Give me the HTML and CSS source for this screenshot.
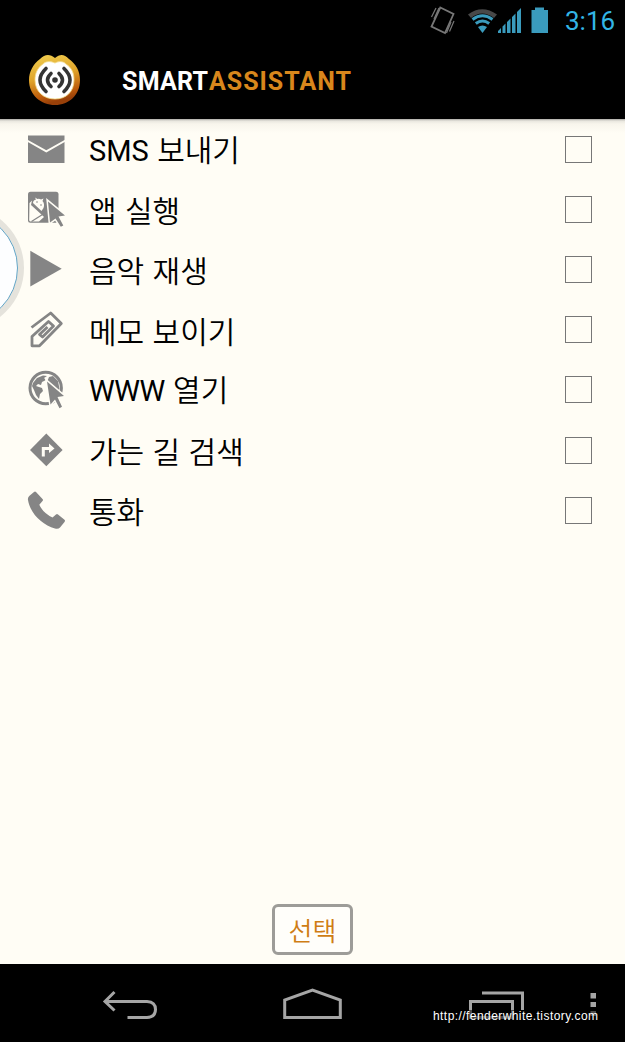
FILE: index.html
```html
<!DOCTYPE html>
<html lang="ko">
<head>
    <meta charset="UTF-8">
    <meta name="viewport" content="width=device-width, initial-scale=1.0">
    <title>Smart Assistant</title>
    <link rel="stylesheet" href="styles.css">
</head>
<body>
    <div class="status-bar">
        <svg class="status-icons" width="130" height="42" viewBox="425 0 130 42">
            <g fill="none" stroke="#777" stroke-width="1.4">
                <path d="M440.300 7.500L453.500 14L445 33L431.500 26.500Z" stroke-width="1.800"/>
                <path d="M436 8L431.500 17M439 8L434 19M454 21L449.500 31.500M451 22L446.500 33" stroke-width="1.200"/>
            </g>
            <path d="M468 14.500Q482 4 497 14.500L494 18Q482 9 471 18Z" fill="#484848"/>
            <g fill="none" stroke="#3a9bbd" stroke-width="3">
                <path d="M472.500 19.500Q482.500 12 492.500 19.500"/>
                <path d="M475.800 23.500Q482.500 18.500 489.200 23.500"/>
            </g>
            <path d="M478 27Q482.500 24 487 27L482.500 33Z" fill="#3a9bbd"/>
            <path d="M498 33V31L501 28V33ZM502.500 33V26.500L505.500 23.500V33ZM507 33V22L510.500 18.500V33ZM512 33V17L515.500 13.500V33ZM517 33V12L521 8V33Z" fill="#3a9bbd"/>
            <path d="M531.500 10H535V7.500H544V10H548V33H531.500Z" fill="#3a9bbd"/>
        </svg>
        <span class="clock">3:16</span>
    </div>

    <div class="header">
        <svg class="logo" width="54" height="54" viewBox="0 0 54 54">
            <defs>
                <linearGradient id="gold" x1="0" y1="0" x2="0.250" y2="1">
                    <stop offset="0" stop-color="#f1d052"/>
                    <stop offset="0.500" stop-color="#e0a42a"/>
                    <stop offset="0.850" stop-color="#bd5b0b"/>
                    <stop offset="1" stop-color="#984009"/>
                </linearGradient>
            </defs>
            <path d="M27 5C22 1 17 1 12 6C5 11 1 19 1 27C1 42 13 52 27 52S52 42 52 27C52 18 48 11 41 6C36 1 32 1 27 5Z" fill="url(#gold)"/>
            <path d="M27 10C22 8 18 8 15 11C9 15 7 21 7 27C7 39 16 46 27 46S46 39 46 27C46 20 44 15 38 11C35 8 31 8 27 10Z" fill="#fff" stroke="#f3d985" stroke-width="0.800"/>
            <circle cx="27" cy="27" r="2.800" fill="#343434"/>
            <g fill="none" stroke="#343434" stroke-width="3.600" stroke-linecap="round">
                <path d="M23 20.500Q16 27 23 33.500M31 20.500Q38 27 31 33.500"/>
                <path d="M18 15.500Q6 27 18 38.500M36 15.500Q48 27 36 38.500"/>
            </g>
        </svg>
        <svg class="title" width="240" height="36" viewBox="0 0 240 36">
            <text x="2" y="26.500" textLength="86" fill="#fff">SMART</text>
            <text x="89" y="26.500" textLength="142" fill="#d9871c">ASSISTANT</text>
        </svg>
    </div>

    <div class="content">
        <div class="bubble"></div>
        <ul class="list">
            <li class="row">
                <svg class="icon" viewBox="0 0 44 44"><path d="M4 8.500H40.500V36H4Z"/><path class="cut" d="M3 13.500L22.300 24.300L41.500 13.500"/></svg>
                <span class="label"><span class="latin">SMS</span> 보내기</span>
                <span class="check"></span>
            </li>
            <li class="row">
                <svg class="icon" viewBox="0 0 44 44">
                    <rect x="4" y="4.700" width="30.500" height="31" rx="2.500"/>
                    <path class="paper" d="M5.500 16L8 13.500L7 18L18 28L20 30L15 34.500H6.500Q5.200 34 5.200 33Z"/>
                    <path class="paper" d="M9 16Q9 13 12 12.500L11 10.500L13.500 12Q15.500 11.500 17 12.500L19.500 11.500L18.500 14Q21 17 19.500 21L17.500 24Z"/>
                    <path d="M7.500 34.500L18.500 27.500" fill="none" stroke="#858585" stroke-width="1.200"/>
                    <circle cx="13" cy="15" r="0.800"/><circle cx="17" cy="18" r="0.800"/>
                    <path class="pointer" d="M24 14.500L41 28.500L34.500 29.500L39.300 38.500L36.800 39.800L31.500 31.500L26 35.500Z"/>
                </svg>
                <span class="label">앱 실행</span>
                <span class="check"></span>
            </li>
            <li class="row">
                <svg class="icon" viewBox="0 0 44 44"><path d="M6.300 3.800L37.700 21.800L6.300 39.500Z"/></svg>
                <span class="label">음악 재생</span>
                <span class="check"></span>
            </li>
            <li class="row">
                <svg class="icon" viewBox="0 0 44 44"><path class="clip" d="M7.500 19.500L26.700 5L37.300 15.600L15.500 37.800H8V28.500L24.500 13.500L29.500 18L18.500 29L15.500 26.500L23.500 19"/></svg>
                <span class="label">메모 보이기</span>
                <span class="check"></span>
            </li>
            <li class="row">
                <svg class="icon" viewBox="0 0 44 44">
                    <circle cx="21.700" cy="20" r="15.700" fill="none" stroke="#858585" stroke-width="3"/>
                    <path d="M9 15L13 10L19 7.500L23 8L20 10L22 12L18 14L17 17L14 16L12 18L18 20L19 23L16 26L15 31L12 27L10 22L8 18Z"/>
                    <path d="M25 9L29 8L34 13L35.500 21L33 24L30 19L26 17L23 14Z"/>
                    <path class="pointer" d="M23 13.500L40 28L33.500 29L38 38.800L35.500 40.300L31 31.500L26.500 36.500Z"/>
                </svg>
                <span class="label"><span class="latin www">WWW</span> 열기</span>
                <span class="check"></span>
            </li>
            <li class="row">
                <svg class="icon" viewBox="0 0 44 44"><path d="M22.300 5.600L38.600 21.900L22.300 38.200L6 21.900Z"/><path d="M19.300 28.500V20.500H26" fill="none" stroke="#fffdf5" stroke-width="3"/><path class="paper" d="M25 15.500L30.500 20.500L25 25Z"/></svg>
                <span class="label">가는 길 검색</span>
                <span class="check"></span>
            </li>
            <li class="row">
                <svg class="icon" viewBox="0 0 44 44"><path d="M10 4Q11 3 12 4L18.500 11Q19.500 12 18.500 13L15.300 16.800Q19 25 28.500 29.500L32 26.500Q33 25.700 34 26.500L40.500 31.800Q41.500 32.700 40.500 34L36 39.500Q34.500 41.200 31 40.500C18 37 6 25 4 12Q3.500 9.500 5.500 7.800Z"/></svg>
                <span class="label">통화</span>
                <span class="check"></span>
            </li>
        </ul>
        <button class="select">선택</button>
    </div>

    <div class="nav-bar">
        <svg class="nav-icons" width="625" height="78" viewBox="0 964 625 78">
            <g fill="none" stroke="#a5a5a5" stroke-width="3">
                <path d="M114.500 992L105 1001.500L114.500 1010.500M105 1001.500H147Q155.500 1002 155.500 1009.500T147 1017.500H127.500"/>
                <path d="M284.700 1017.500V1000L312.500 990L340.300 1000V1017.500Z"/>
                <path d="M482 993H522.500V1010M470.500 1011V1001.500H512.500V1011"/>
                <path d="M470.500 1010V1017.500H512.500V1010" stroke="#4a4a4a"/>
            </g>
            <path d="M590.500 993H596V998.500H590.500ZM590.500 1002H596V1007H590.500Z" fill="#a5a5a5"/>
            <path d="M590.500 1011H596V1016H590.500Z" fill="#4a4a4a"/>
            <text class="address" x="433" y="1020" textLength="165">http://fenderwhite.tistory.com</text>
        </svg>
    </div>
</body>
</html>
```
FILE: styles.css
```css
body {
    margin: 0;
    width: 625px;
    height: 1042px;
    display: flex;
    flex-direction: column;
    overflow: hidden;
    background-color: #000;
    font-family: "Noto Sans CJK KR", sans-serif;
}
.status-bar {
    height: 42px;
    display: flex;
    justify-content: flex-end;
    align-items: center;
    padding-right: 10px;
}
.clock {
    width: 50px;
    margin-left: 10px;
    font-family: Roboto, sans-serif;
    font-size: 26px;
    color: #33b5e5;
}
.header {
    height: 77px;
    display: flex;
    align-items: center;
    padding-left: 28px;
}
.logo {
    margin-bottom: 2px;
}
.title {
    margin-left: 38px;
    font-family: Roboto, sans-serif;
    font-size: 25px;
    font-weight: 700;
}
.content {
    position: relative;
    height: 845px;
    display: flex;
    flex-direction: column;
    align-items: center;
    background: linear-gradient(#aaa9a4 0, #e9e7df 2px, #f8f5ec 5px, #fffdf5 14px);
    overflow: hidden;
}
/* floating handle at the screen edge */
.bubble {
    position: absolute;
    left: -94px;
    top: 93px;
    width: 110px;
    height: 110px;
    border: 1px solid #62a5c7;
    border-radius: 50%;
    background-color: #fdfeff;
    box-shadow: 0 0 0 6px #e5e3dc;
}
.list {
    width: 100%;
    margin: 0;
    padding: 0;
    list-style: none;
}
.row {
    height: 60.200px;
    display: flex;
    align-items: center;
    padding: 0 33px 0 24px;
    box-sizing: border-box;
}
.icon {
    width: 44px;
    height: 44px;
    fill: #858585;
}
.cut {
    fill: none;
    stroke: #fffdf5;
    stroke-width: 2;
}
.paper {
    fill: #fffdf5;
}
.pointer {
    stroke: #fffdf5;
    stroke-width: 3;
    paint-order: stroke;
}
.clip {
    fill: none;
    stroke: #858585;
    stroke-width: 2.800;
    stroke-linejoin: round;
}
.label {
    flex: 1;
    margin-left: 21px;
    font-size: 30px;
    font-weight: 350;
    line-height: 44px;
    color: #000;
}
.latin {
    font-family: Roboto, sans-serif;
    font-size: 29px;
    font-weight: 400;
}
.www {
    letter-spacing: -0.500px;
}
.check {
    width: 25px;
    height: 25px;
    border: 1px solid #777;
}
.select {
    width: 81px;
    height: 51px;
    margin-top: auto;
    margin-bottom: 9px;
    padding: 0;
    border: 3px solid #9d9c98;
    border-radius: 6px;
    background-color: #fffefa;
    font-family: "Noto Sans CJK KR", sans-serif;
    font-size: 26px;
    font-weight: 350;
    color: #cf7d14;
}
.nav-bar {
    height: 78px;
}
.nav-icons {
    display: block;
}
.address {
    font-family: "Liberation Sans", sans-serif;
    font-size: 12px;
    fill: #fff;
}
```
